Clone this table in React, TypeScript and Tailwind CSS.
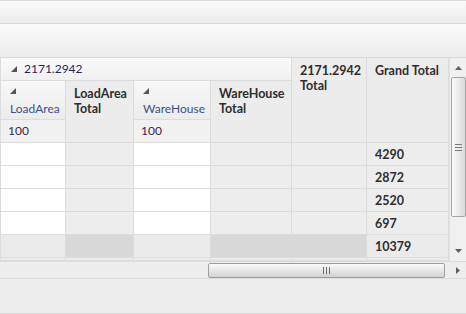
import React from "react";

const font = { fontFamily: 'Lato, "Open Sans", sans-serif' };

function Tri() {
  return (
    <svg width="6" height="6" viewBox="0 0 6 6" className="shrink-0">
      <path d="M6 0 L6 6 L0 6 Z" fill="#555" />
    </svg>
  );
}

const rows = ["4290", "2872", "2520", "697"];

function VScroll() {
  return (
    <div className="w-[17px] h-full bg-[#f0f0f0] border-l border-[#e2e2e2] flex flex-col items-center">
      <div className="h-[19px] w-full flex items-center justify-center">
        <svg width="7" height="4" viewBox="0 0 7 4">
          <path d="M3.5 0 L7 4 L0 4 Z" fill="#606060" />
        </svg>
      </div>
      <div className="w-[15px] h-[140px] rounded-[2px] border border-[#a5a5a5] bg-gradient-to-r from-[#fafafa] to-[#d9d9d9] flex items-center justify-center">
        <div className="flex flex-col gap-[2px]">
          <div className="w-[7px] h-px bg-[#7a7a7a]" />
          <div className="w-[7px] h-px bg-[#7a7a7a]" />
          <div className="w-[7px] h-px bg-[#7a7a7a]" />
        </div>
      </div>
      <div className="flex-1 w-full flex items-end justify-center pb-[8px]">
        <svg width="7" height="4" viewBox="0 0 7 4">
          <path d="M0 0 L7 0 L3.5 4 Z" fill="#606060" />
        </svg>
      </div>
    </div>
  );
}

function HScroll() {
  return (
    <div className="h-[18px] flex border-t border-b border-[#dcdcdc] bg-[#ededed]">
      <div className="w-[449px] flex items-center">
        <div className="ml-[208px] w-[237px] h-[15px] rounded-[2px] border border-[#9d9d9d] bg-gradient-to-b from-[#fbfbfb] to-[#d2d2d2] flex items-center justify-center">
          <div className="flex gap-[2px]">
            <div className="w-px h-[7px] bg-[#707070]" />
            <div className="w-px h-[7px] bg-[#707070]" />
            <div className="w-px h-[7px] bg-[#707070]" />
          </div>
        </div>
      </div>
      <div className="w-[17px] flex items-center justify-center">
        <svg width="4" height="7" viewBox="0 0 4 7">
          <path d="M0 0 L4 3.5 L0 7 Z" fill="#606060" />
        </svg>
      </div>
    </div>
  );
}

export default function App() {
  const cell = "border-r border-b border-[#dcdcdc]";
  const bold = "font-bold text-[12.5px] leading-[15px] text-[#2e2e2e] whitespace-nowrap";
  const label = "text-[12px] leading-[14px]";
  return (
    <div className="w-[466px] h-[314px] bg-[#ededed] flex flex-col overflow-hidden" style={font}>
      {/* toolbars */}
      <div className="h-[24px] border-t border-b border-[#dadada] bg-gradient-to-b from-[#fbfbfb] to-[#ececec]" />
      <div className="h-[34px] border-b border-[#dadada] bg-gradient-to-b from-[#fbfbfb] to-[#ececec]" />

      <div className="h-[203px] flex">
        <div className="w-[449px] overflow-hidden border-l border-[#dcdcdc]">
          <div className="grid grid-cols-[65px_68px_77px_81px_75px_82px] grid-rows-[23px_39px_23px_23px_23px_23px_23px_23px_3px]">
            <div className={`${cell} col-span-4 bg-gradient-to-b from-[#fafafa] to-[#f0f0f0] flex items-center gap-[7px] pl-[10px] ${label} text-[#26265a]`}>
              <Tri />
              <span>2171.2942</span>
            </div>
            <div className={`${cell} row-span-3 bg-[#ececec] px-[8px] pt-[5px] ${bold}`}>
              2171.2942
              <br />
              Total
            </div>
            <div className={`${cell} row-span-3 bg-[#ececec] px-[8px] pt-[5px] ${bold}`}>Grand Total</div>

            <div className={`${cell} bg-gradient-to-b from-[#f7f7f7] to-[#ececec] pl-[9px] pt-[7px] flex flex-col`}>
              <Tri />
              <span className={`mt-[8px] ${label} text-[#3f4f7e]`}>LoadArea</span>
            </div>
            <div className={`${cell} row-span-2 bg-[#ececec] px-[8px] pt-[5px] ${bold}`}>
              LoadArea
              <br />
              Total
            </div>
            <div className={`${cell} bg-gradient-to-b from-[#f7f7f7] to-[#ececec] pl-[9px] pt-[7px] flex flex-col`}>
              <Tri />
              <span className={`mt-[8px] ${label} text-[#3f4f7e]`}>WareHouse</span>
            </div>
            <div className={`${cell} row-span-2 bg-[#ececec] px-[8px] pt-[5px] ${bold}`}>
              WareHouse
              <br />
              Total
            </div>

            <div className={`${cell} bg-[#f1f1f1] pl-[7px] flex items-center ${label} text-[#3a2450]`}>100</div>
            <div className={`${cell} bg-[#f1f1f1] pl-[7px] flex items-center ${label} text-[#3a2450]`}>100</div>

            {rows.map((v) => (
              <React.Fragment key={v}>
                <div className={`${cell} bg-white`} />
                <div className={`${cell} bg-[#ededed]`} />
                <div className={`${cell} bg-white`} />
                <div className={`${cell} bg-[#ededed]`} />
                <div className={`${cell} bg-[#ededed]`} />
                <div className={`${cell} bg-[#ededed] pl-[8px] flex items-center ${bold}`}>{v}</div>
              </React.Fragment>
            ))}

            <div className={`${cell} bg-[#ebebeb]`} />
            <div className="border-r border-b border-[#dcdcdc] bg-[#d8d8d8]" />
            <div className={`${cell} bg-[#ebebeb]`} />
            <div className="col-span-2 border-r border-b border-[#dcdcdc] bg-[#d8d8d8]" />
            <div className={`${cell} bg-[#ebebeb] pl-[8px] flex items-center ${bold}`}>10379</div>

            <div className={`${cell} bg-[#ebebeb]`} />
            <div className={`${cell} bg-[#ebebeb]`} />
            <div className={`${cell} bg-[#ebebeb]`} />
            <div className={`${cell} bg-[#ebebeb]`} />
            <div className={`${cell} bg-[#ebebeb]`} />
            <div className={`${cell} bg-[#ebebeb]`} />
          </div>
        </div>
        <VScroll />
      </div>

      <HScroll />
      <div className="flex-1 border-b border-[#d6d6d6] bg-[#ededed]" />
    </div>
  );
}
